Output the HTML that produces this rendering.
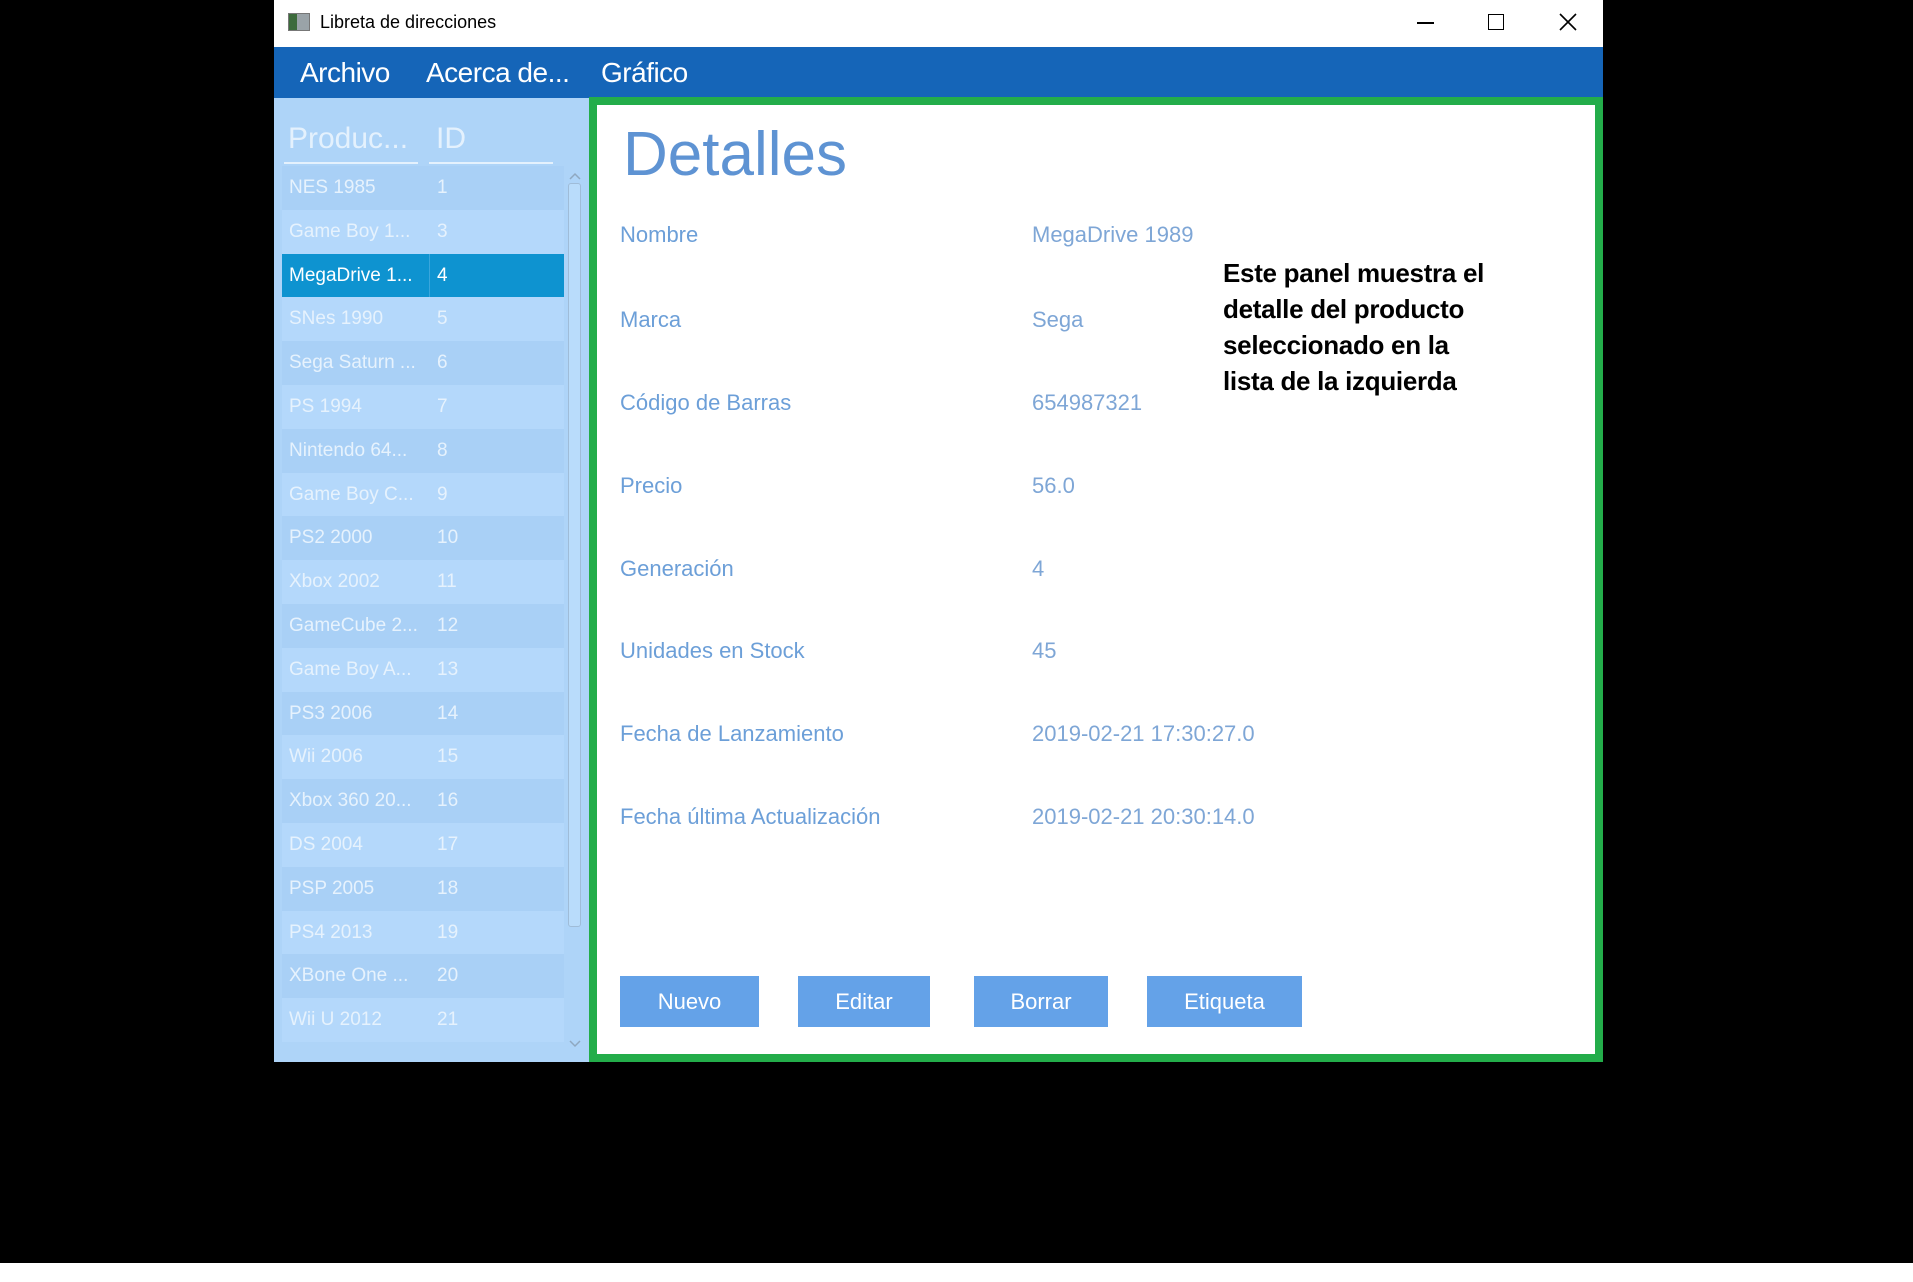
<!DOCTYPE html>
<html><head><meta charset="utf-8"><style>
*{margin:0;padding:0;box-sizing:border-box}
body{width:1913px;height:1282px;background:#000;position:relative;overflow:hidden;font-family:"Liberation Sans",sans-serif}
.a{position:absolute;white-space:nowrap}
#win{left:274px;top:0;width:1329px;height:1062px;background:#fff}
.title{left:0;top:0;width:1329px;height:47px;background:#fff}
.menu{left:0;top:47px;width:1329px;height:51px;background:#1565b8}
.menu span{position:absolute;top:8px;color:#fff;font-size:28px;letter-spacing:-0.5px}
.list{left:0;top:98px;width:316px;height:964px;background:#aed4f8}
.row{position:absolute;left:8px;width:282px;height:44px;font-size:19px;color:#e6f2fd}
.row .n{position:absolute;left:7px;top:11px}
.row .i{position:absolute;left:155px;top:11px}
.sel{background:#0e93d0;color:#fff}
.green{left:315px;top:97px;width:1014px;height:965px;border:8px solid #23ad4a;background:#fff}
.lab{font-size:22px;color:#6c9fd8}
.val{font-size:22px;color:#7ea6d6}
.btn{position:absolute;top:976px;height:51px;background:#64a2e8;color:#fff;font-size:22px;text-align:center;line-height:51px}
.ann{left:626px;top:150px;font-size:26px;font-weight:bold;color:#000;line-height:36px;letter-spacing:-0.3px}
</style></head><body>
<div class="a" id="win">
 <div class="a title">
  <div class="a" style="left:14px;top:13px;width:22px;height:18px;background:#9aa3a8;border:1px solid #777"><div style="width:8px;height:16px;background:#3c6b3c"></div></div>
  <div class="a" style="left:46px;top:12px;font-size:18px;color:#000">Libreta de direcciones</div>
  <div class="a" style="left:1143px;top:22px;width:17px;height:2px;background:#000"></div>
  <div class="a" style="left:1214px;top:14px;width:16px;height:16px;border:1.5px solid #000"></div>
  <svg class="a" style="left:1285px;top:13px" width="18" height="18"><path d="M1 1L17 17M17 1L1 17" stroke="#000" stroke-width="1.6"/></svg>
 </div>
 <div class="a menu"><span style="left:26px;top:10px">Archivo</span><span style="left:152px;top:10px">Acerca de...</span><span style="left:327px;top:10px">Gráfico</span></div>
 <div class="a list">
  <div class="a" style="left:14px;top:24px;font-size:30px;color:#e4f1fd">Produc...</div>
  <div class="a" style="left:162px;top:24px;font-size:30px;color:#e4f1fd">ID</div>
  <div class="a" style="left:10px;top:64px;width:134px;height:2px;background:#e4f1fd"></div>
  <div class="a" style="left:155px;top:64px;width:124px;height:2px;background:#e4f1fd"></div>
  <svg class="a" style="left:293px;top:72px" width="16" height="12"><path d="M3 9L8 4L13 9" stroke="#8fa8c0" fill="none" stroke-width="1.5"/></svg>
  <div class="a" style="left:294px;top:85px;width:13px;height:744px;border:1px solid #9fbcd8;border-radius:3px;background:#b9dcfb"></div>
  <svg class="a" style="left:293px;top:940px" width="16" height="12"><path d="M3 3L8 8L13 3" stroke="#8fa8c0" fill="none" stroke-width="1.5"/></svg>
 </div>
 <div class="a green">
  <div class="a" style="left:26px;top:14px;font-size:62px;color:#5e93d3">Detalles</div>
  <div class="a ann">Este panel muestra el<br>detalle del producto<br>seleccionado en la<br>lista de la izquierda</div>
 </div>
</div>
<div id="rows"></div>
<script>
var items=[["NES 1985",1],["Game Boy 1...",3],["MegaDrive 1...",4],["SNes 1990",5],["Sega Saturn ...",6],["PS 1994",7],["Nintendo 64...",8],["Game Boy C...",9],["PS2 2000",10],["Xbox 2002",11],["GameCube 2...",12],["Game Boy A...",13],["PS3 2006",14],["Wii 2006",15],["Xbox 360 20...",16],["DS 2004",17],["PSP 2005",18],["PS4 2013",19],["XBone One ...",20],["Wii U 2012",21]];
var h="";
items.forEach(function(it,k){var top=166+k*43.8;var bg=k==2?"":(k%2?"background:#b4d8fb;":"background:#a9d0f6;");
h+='<div class="row a'+(k==2?' sel':'')+'" style="left:282px;top:'+top+'px;'+bg+'"><span class="n">'+it[0]+'</span><span class="i">'+it[1]+'</span>'+(k==2?'<div style="position:absolute;left:147px;top:0;width:1px;height:44px;background:#3aa6dc"></div>':'')+'</div>';});
var L=[["Nombre","MegaDrive 1989"],["Marca","Sega"],["Código de Barras","654987321"],["Precio","56.0"],["Generación","4"],["Unidades en Stock","45"],["Fecha de Lanzamiento","2019-02-21 17:30:27.0"],["Fecha última Actualización","2019-02-21 20:30:14.0"]];
var ys=[235,320,403,486,569,651,734,817];
L.forEach(function(l,k){h+='<div class="a lab" style="left:620px;top:'+(ys[k]-13)+'px">'+l[0]+'</div><div class="a val" style="left:1032px;top:'+(ys[k]-13)+'px">'+l[1]+'</div>';});
[["Nuevo",620,139],["Editar",798,132],["Borrar",974,134],["Etiqueta",1147,155]].forEach(function(b){h+='<div class="btn" style="left:'+b[1]+'px;width:'+b[2]+'px">'+b[0]+'</div>';});
document.getElementById("rows").innerHTML=h;
</script>
<div class="a" style="left:0;top:1263px;width:1913px;height:19px;background:#fff"></div>
</body></html>
